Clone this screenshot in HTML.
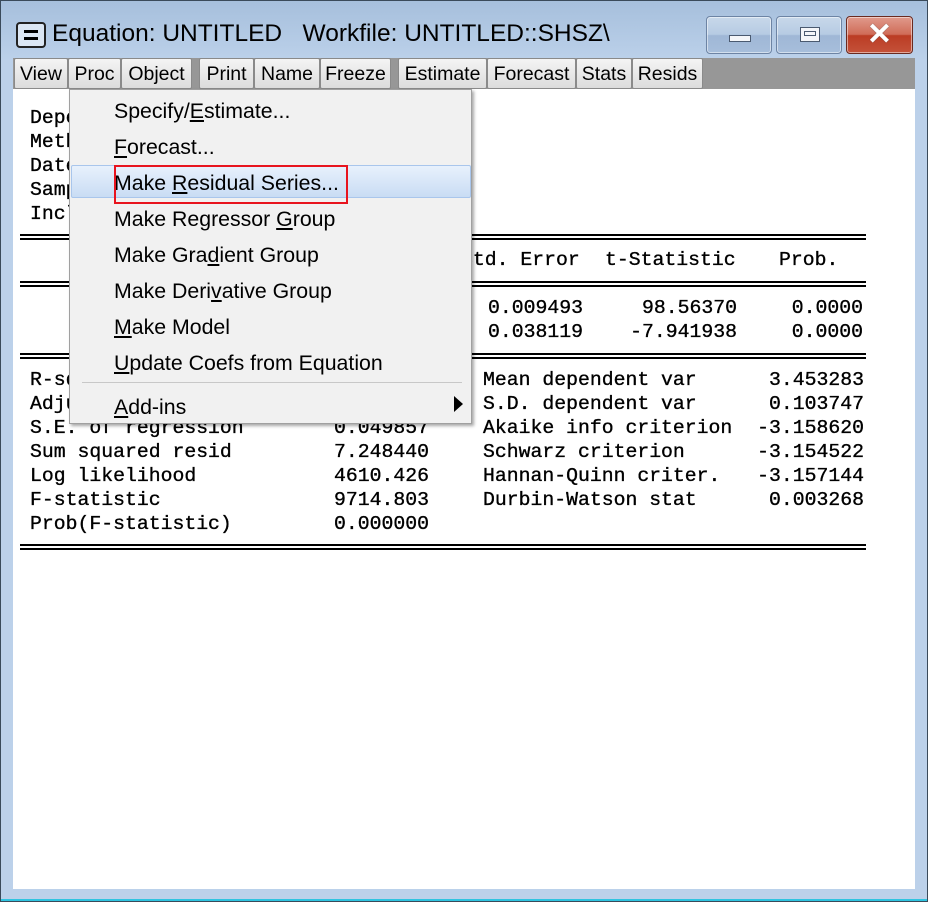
<!DOCTYPE html>
<html><head><meta charset="utf-8"><style>
*{margin:0;padding:0;box-sizing:border-box}
body{width:928px;height:902px;overflow:hidden;background:#bcd1ea;position:relative;font-family:"Liberation Sans",sans-serif}
.frame{position:absolute;left:0;top:0;width:928px;height:902px;border:1px solid #3a4a5a;background:linear-gradient(#a6bfdc 0,#bcd1ea 60px,#bcd1ea 100%)}
.bottomline{position:absolute;left:1px;right:1px;top:899px;height:2px;background:#2fc4e0}
.icon{position:absolute;left:16px;top:22px;width:30px;height:26px;border:2px solid #222;border-radius:4px;background:#dbe6f3}
.icon:before,.icon:after{content:"";position:absolute;left:6px;width:14px;height:3px;background:#000}
.icon:before{top:6px}.icon:after{top:13px}
.title{position:absolute;left:52px;top:20px;font-size:24.5px;color:#000;white-space:pre}
.wb{position:absolute;top:16px;height:38px;border:1px solid #6d84a4;border-radius:4px;background:linear-gradient(#c8d8ea 0,#b6cbe3 48%,#9fb7d6 52%,#a7bedb 100%);box-shadow:inset 0 0 0 1px rgba(255,255,255,.5)}
.cl{background:linear-gradient(#e09a8c 0,#d06c58 48%,#bb3c24 52%,#c4523a 100%);border-color:#6a2a20}
.tb{position:absolute;left:13px;top:58px;width:902px;height:31px;background:#979797}
.btn{position:absolute;top:58px;height:31px;border:1px solid #8a8a8a;border-radius:2px;background:linear-gradient(#f4f4f4,#dcdcdc);font-size:19.5px;line-height:31px;text-align:center;color:#000}
.content{position:absolute;left:13px;top:89px;width:902px;height:800px;background:#fff}
.m{position:absolute;font-family:"Liberation Mono",monospace;font-size:19.8px;-webkit-text-stroke:.35px #000;white-space:pre;line-height:24px}
.r{text-align:right}
.dl{position:absolute;left:20px;width:846px;height:6px;border-top:2px solid #000;border-bottom:2px solid #000}
.menu{position:absolute;left:69px;top:89px;width:403px;height:335px;background:#f1f1f1;border:1px solid #a0a0a0;box-shadow:2px 2px 3px rgba(0,0,0,.35)}
.mi{position:absolute;left:44px;font-size:21.3px;color:#000;white-space:pre;line-height:26px}
.hl{position:absolute;left:1px;top:75px;width:400px;height:33px;border:1px solid #a9c6ec;border-radius:2px;background:linear-gradient(#e8f1fc,#c9dcf4)}
.red{position:absolute;left:44px;top:75px;width:234px;height:39px;border:2px solid #e8141e}
u{text-decoration:underline;text-underline-offset:2px}
</style></head><body>
<div class="frame"></div>
<div class="bottomline"></div>
<div class="icon"></div>
<div class="title">Equation: UNTITLED   Workfile: UNTITLED::SHSZ\</div>
<div class="wb" style="left:706px;width:66px"><div style="position:absolute;left:22px;top:18px;width:22px;height:7px;border:1px solid #4a5a70;background:#f4f6f9"></div></div>
<div class="wb" style="left:776px;width:66px"><div style="position:absolute;left:23px;top:10px;width:20px;height:15px;border:1px solid #4a5a70;background:#f4f6f9"><div style="margin:3px 3px;height:5px;border:1px solid #4a5a70"></div></div></div>
<div class="wb cl" style="left:846px;width:67px"><div style="position:absolute;left:0;right:0;top:2px;text-align:center;color:#fff;font-size:30px;font-weight:bold;line-height:32px;text-shadow:0 0 1px #555">✕</div></div>
<div class="tb"></div>
<div class="btn" style="left:14px;width:54px">View</div>
<div class="btn" style="left:68px;width:53px">Proc</div>
<div class="btn" style="left:121px;width:71px">Object</div>
<div class="btn" style="left:199px;width:55px">Print</div>
<div class="btn" style="left:254px;width:66px">Name</div>
<div class="btn" style="left:320px;width:71px">Freeze</div>
<div class="btn" style="left:398px;width:89px">Estimate</div>
<div class="btn" style="left:487px;width:89px">Forecast</div>
<div class="btn" style="left:576px;width:56px">Stats</div>
<div class="btn" style="left:632px;width:71px">Resids</div>
<div class="content"></div>
<div class="m" style="left:30px;top:106px">Dependent Variable: SHSZ
Method: Least Squares
Date: 
Sample: 
Included observations:</div>
<div class="dl" style="top:234px"></div>
<div class="m" style="left:461px;top:248px">Std. Error</div>
<div class="m" style="left:605px;top:248px">t-Statistic</div>
<div class="m" style="left:779px;top:248px">Prob.</div>
<div class="dl" style="top:281px"></div>
<div class="m r" style="left:400px;width:183px;top:296px">0.009493
0.038119</div>
<div class="m r" style="left:600px;width:137px;top:296px">98.56370
-7.941938</div>
<div class="m r" style="left:760px;width:103px;top:296px">0.0000
0.0000</div>
<div class="dl" style="top:353px"></div>
<div class="m" style="left:30px;top:368px">R-squared
Adjusted R-squared
S.E. of regression
Sum squared resid
Log likelihood
F-statistic
Prob(F-statistic)</div>
<div class="m r" style="left:280px;width:149px;top:368px">0.919
0.918
0.049857
7.248440
4610.426
9714.803
0.000000</div>
<div class="m" style="left:483px;top:368px">Mean dependent var
S.D. dependent var
Akaike info criterion
Schwarz criterion
Hannan-Quinn criter.
Durbin-Watson stat</div>
<div class="m r" style="left:740px;width:124px;top:368px">3.453283
0.103747
-3.158620
-3.154522
-3.157144
0.003268</div>
<div class="dl" style="top:544px"></div>
<div class="menu">
<div class="hl"></div>
<div class="mi" style="top:8px">Specify/<u>E</u>stimate...</div>
<div class="mi" style="top:44px"><u>F</u>orecast...</div>
<div class="mi" style="top:80px">Make <u>R</u>esidual Series...</div>
<div class="mi" style="top:116px">Make Regressor <u>G</u>roup</div>
<div class="mi" style="top:152px">Make Gra<u>d</u>ient Group</div>
<div class="mi" style="top:188px">Make Deri<u>v</u>ative Group</div>
<div class="mi" style="top:224px"><u>M</u>ake Model</div>
<div class="mi" style="top:260px"><u>U</u>pdate Coefs from Equation</div>
<div style="position:absolute;left:12px;top:292px;width:380px;height:1px;background:#c8c8c8"></div>
<div class="mi" style="top:304px"><u>A</u>dd-ins</div>
<div style="position:absolute;left:384px;top:306px;width:0;height:0;border-top:8px solid transparent;border-bottom:8px solid transparent;border-left:9px solid #000"></div>
<div class="red"></div>
</div>
</body></html>
